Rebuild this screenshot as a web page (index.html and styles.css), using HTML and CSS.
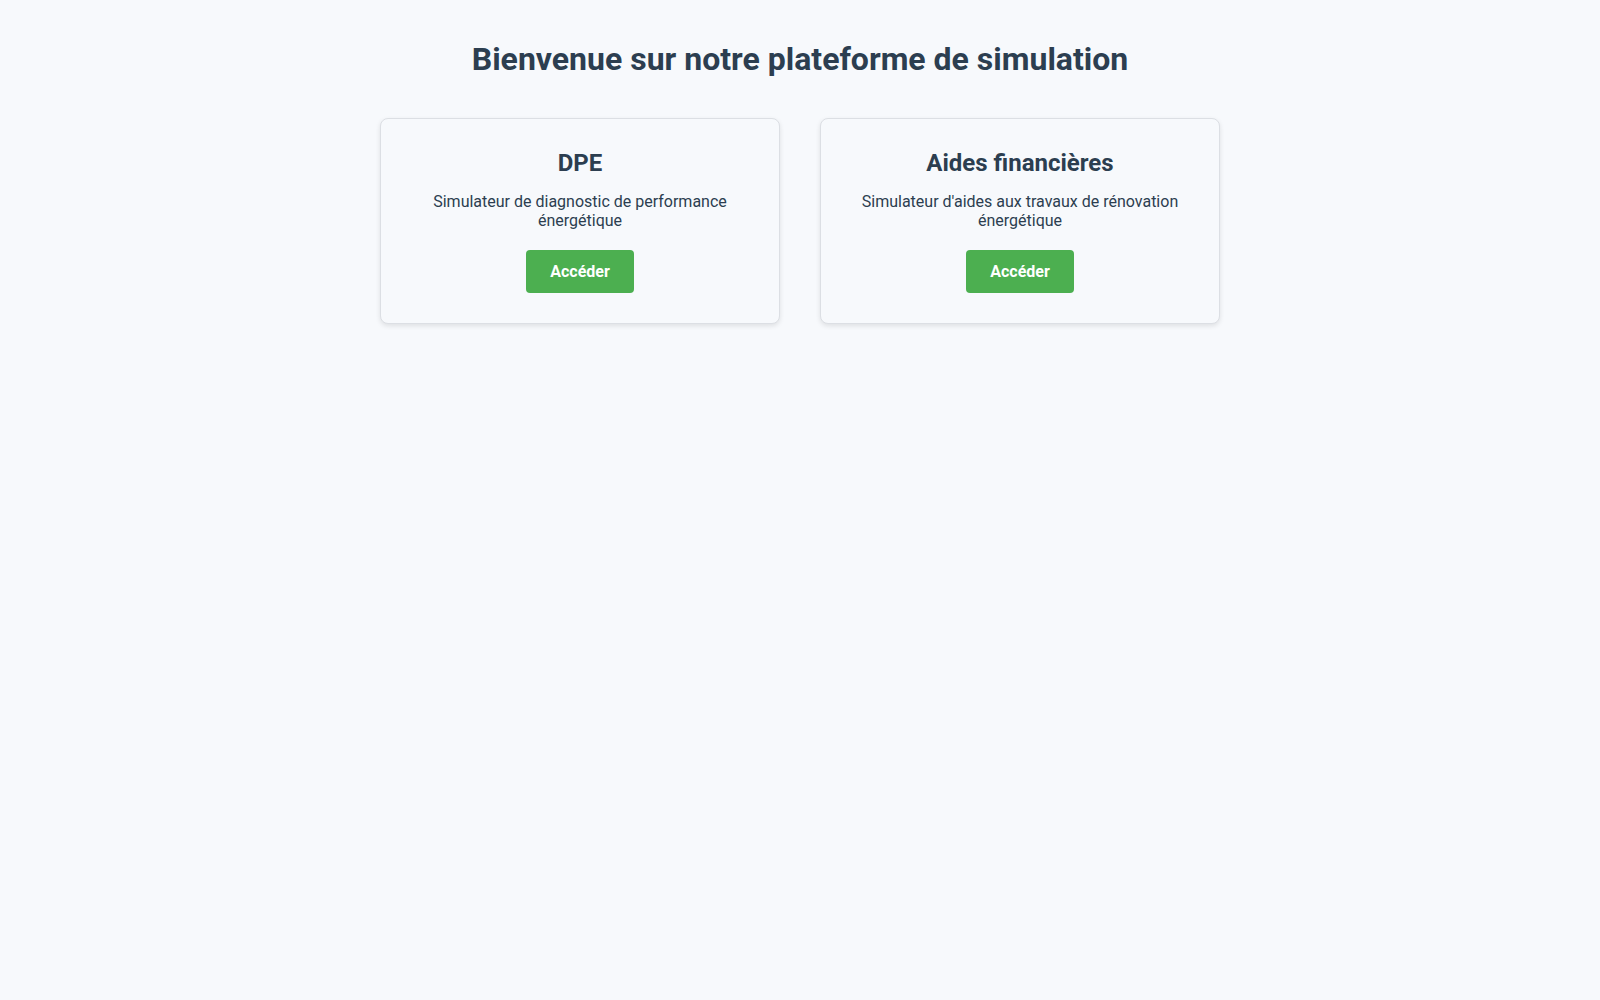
FILE: index.html
```html
<!DOCTYPE html>
<html lang="fr">
<head>
<meta charset="utf-8">
<title>Plateforme de simulation</title>
<link rel="stylesheet" href="styles.css">
</head>
<body>
<main class="page">
  <h1 class="title">Bienvenue sur notre plateforme de simulation</h1>
  <div class="cards">
    <section class="card">
      <h2 class="card-title">DPE</h2>
      <p class="card-text">Simulateur de diagnostic de performance énergétique</p>
      <a class="btn" href="#">Accéder</a>
    </section>
    <section class="card">
      <h2 class="card-title">Aides financières</h2>
      <p class="card-text">Simulateur d'aides aux travaux de rénovation énergétique</p>
      <a class="btn" href="#">Accéder</a>
    </section>
  </div>
</main>
</body>
</html>
```
FILE: styles.css
```css
html, body {
  margin: 0;
  padding: 0;
  background: #f7f9fc;
}
body {
  font-family: Roboto, "Liberation Sans", Arial, sans-serif;
  color: #2c3e50;
}
.page {
  padding: 40px 20px;
  display: flex;
  flex-direction: column;
  align-items: center;
}
.title {
  margin: 0 0 40px;
  font-size: 32px;
  font-weight: 700;
  color: #2c3e50;
  text-align: center;
}
.cards {
  display: flex;
  gap: 40px;
}
.card {
  box-sizing: border-box;
  width: 400px;
  padding: 30px;
  background: #f7f9fc;
  border: 1px solid #dcdfe4;
  border-radius: 8px;
  box-shadow: 0 2px 5px rgba(0, 0, 0, 0.1);
  display: flex;
  flex-direction: column;
  align-items: center;
  text-align: center;
}
.card-title {
  margin: 0 0 15px;
  font-size: 24px;
  font-weight: 700;
  color: #2c3e50;
}
.card-text {
  margin: 0 0 20px;
  font-size: 16px;
  color: #2c3e50;
}
.btn {
  display: inline-block;
  padding: 12px 24px;
  background: #4caf50;
  color: #fff;
  font-size: 16px;
  font-weight: 700;
  text-decoration: none;
  border-radius: 4px;
}
```
